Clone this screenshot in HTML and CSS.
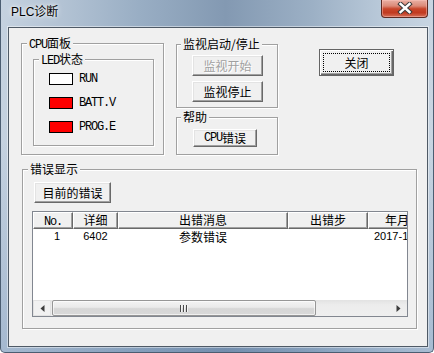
FILE: index.html
```html
<!DOCTYPE html>
<html lang="zh">
<head>
<meta charset="utf-8">
<title>PLC诊断</title>
<link rel="stylesheet" href="styles.css">
</head>
<body>
<div class="window">
  <div class="titlebar">
    <span class="title">PLC诊断</span>
    <div class="close-btn">
      <svg width="16" height="12" viewBox="0 0 16 12">
        <path d="M3.5 2 L12.5 10 M12.5 2 L3.5 10" stroke="#3b3b3b" stroke-width="4.4" stroke-linecap="square" fill="none"/>
        <path d="M3.5 2 L12.5 10 M12.5 2 L3.5 10" stroke="#ffffff" stroke-width="2.4" stroke-linecap="square" fill="none"/>
      </svg>
    </div>
  </div>
  <div class="client">
    <div class="top-row">
      <div class="group cpu">
        <span class="legend"><span class="m">CPU</span>面板</span>
        <div class="group led">
          <span class="legend"><span class="m">LED</span>状态</span>
          <div class="led-row"><span class="led off"></span><span class="m">RUN</span></div>
          <div class="led-row"><span class="led on"></span><span class="m">BATT.V</span></div>
          <div class="led-row"><span class="led on"></span><span class="m">PROG.E</span></div>
        </div>
      </div>
      <div class="mid-col">
        <div class="group monitor">
          <span class="legend mid">监视启动/停止</span>
          <button class="btn mon-btn" disabled>监视开始</button>
          <button class="btn mon-btn">监视停止</button>
        </div>
        <div class="group help">
          <span class="legend mid">帮助</span>
          <button class="btn cpu-btn"><span class="m">CPU</span>错误</button>
        </div>
      </div>
      <button class="btn default-btn"><span class="focus">关闭</span></button>
    </div>
    <div class="group errors">
      <span class="legend">错误显示</span>
      <button class="btn cur-btn">目前的错误</button>
      <div class="list">
        <div class="lv-head">
          <div class="hc c1"><span class="m">No.</span></div>
          <div class="hc c2">详细</div>
          <div class="hc c3">出错消息</div>
          <div class="hc c4">出错步</div>
          <div class="hc c5">年月日时</div>
        </div>
        <div class="lv-row">
          <div class="cell c1 num right">1</div>
          <div class="cell c2 num center">6402</div>
          <div class="cell c3 center">参数错误</div>
          <div class="cell c4"></div>
          <div class="cell c5 num">2017-11-20 10:15</div>
        </div>
        <div class="lv-body"></div>
        <div class="hscroll">
          <div class="sb-btn">
            <svg width="5" height="7" viewBox="0 0 5 7"><polygon points="4.5,0 0.5,3.5 4.5,7" fill="#3c3c3c"/></svg>
          </div>
          <div class="sb-track">
            <div class="sb-thumb">
              <svg width="8" height="7" viewBox="0 0 8 7">
                <rect x="0" y="0" width="1" height="7" fill="#4a4a4a"/>
                <rect x="3" y="0" width="1" height="7" fill="#4a4a4a"/>
                <rect x="6" y="0" width="1" height="7" fill="#4a4a4a"/>
                <rect x="1" y="0" width="1" height="7" fill="#f4f4f4"/>
                <rect x="4" y="0" width="1" height="7" fill="#f4f4f4"/>
                <rect x="7" y="0" width="1" height="7" fill="#f4f4f4"/>
              </svg>
            </div>
          </div>
          <div class="sb-btn">
            <svg width="5" height="7" viewBox="0 0 5 7"><polygon points="0.5,0 4.5,3.5 0.5,7" fill="#3c3c3c"/></svg>
          </div>
        </div>
      </div>
    </div>
  </div>
</div>
</body>
</html>
```

FILE: styles.css
```css
* {
  box-sizing: border-box;
  margin: 0;
  padding: 0;
}

html, body {
  width: 434px;
  height: 353px;
  overflow: hidden;
  background: #ffffff;
}

body {
  font-family: "Noto Sans CJK SC", "Liberation Sans", sans-serif;
  font-size: 12px;
  color: #000;
}

.m {
  font-family: "Liberation Mono", "Noto Sans CJK SC", monospace;
  letter-spacing: -1.2px;
}

.window {
  width: 434px;
  height: 353px;
  display: flex;
  flex-direction: column;
  padding: 0 5px 5px 7px;
  border: 1px solid #4b5d71;
  border-top: none;
  border-radius: 0 0 5px 5px;
  background:
    linear-gradient(180deg, rgba(255,255,255,0) 0%, rgba(255,255,255,0) 40%, rgba(70,110,160,0.25) 100%),
    linear-gradient(90deg, #c5d2e0 0%, #b3c3d4 14%, #99aec4 32%, #8399b2 52%, #9cb0c5 72%, #b9c9d9 88%, #c8d5e2 100%);
}

.titlebar {
  height: 27px;
  display: flex;
  justify-content: space-between;
  align-items: flex-start;
  flex-shrink: 0;
}

.title {
  font-family: "Liberation Sans", "Noto Sans CJK SC", sans-serif;
  font-size: 12px;
  line-height: 14px;
  padding: 5px 0 0 3px;
  color: #000;
  text-shadow: 0 0 6px rgba(255,255,255,0.9), 0 0 3px rgba(255,255,255,0.8);
}

.close-btn {
  width: 47px;
  height: 18px;
  display: flex;
  align-items: center;
  justify-content: center;
  border: 1px solid #5e2a22;
  border-top: none;
  border-radius: 0 0 4px 4px;
  background: linear-gradient(180deg, #e9b0a4 0%, #dc8a78 35%, #c8452a 52%, #c13a20 75%, #d5715a 100%);
  box-shadow: inset 0 0 0 1px rgba(255,200,190,0.45);
}

.close-btn svg {
  display: block;
  margin-top: -1px;
}

.client {
  flex: 1;
  background: #f0f0f0;
  border: 1px solid #4f5a66;
  box-shadow: 0 0 0 1px rgba(255,255,255,0.45);
}

.top-row {
  display: flex;
  align-items: flex-start;
  margin: 15px 0 0 12px;
}

.group {
  position: relative;
  border: 1px solid #a0a0a0;
  box-shadow: 1px 1px 0 #ffffff, inset 1px 1px 0 #ffffff;
}

.legend {
  position: absolute;
  top: -8px;
  left: 5px;
  padding: 0 2px;
  line-height: 14px;
  background: #f0f0f0;
  white-space: nowrap;
}

.legend.mid {
  left: 4px;
}

.cpu {
  width: 143px;
  height: 112px;
  padding: 15px 0 0 11px;
}

.led {
  width: 121px;
  height: 87px;
  padding: 13px 0 0 15px;
}

.led-row {
  display: flex;
  align-items: center;
  gap: 6px;
  height: 12px;
  margin-bottom: 12px;
  line-height: 12px;
}

.led {
  display: block;
}

.led-row .led {
  width: 24px;
  height: 12px;
  padding: 0;
  border: 1px solid #000;
}

.led-row .led.off {
  background: #ffffff;
}

.led-row .led.on {
  background: #ff0000;
}

.mid-col {
  display: flex;
  flex-direction: column;
  gap: 9px;
  margin: 1px 0 0 12px;
}

.monitor {
  width: 102px;
  height: 64px;
  padding: 10px 0 0 15px;
  display: flex;
  flex-direction: column;
  gap: 5px;
}

.help {
  width: 102px;
  height: 38px;
  padding: 11px 0 0 16px;
}

.btn {
  display: flex;
  align-items: center;
  justify-content: center;
  background: #f0f0f0;
  color: #000;
  font-family: "Noto Sans CJK SC", "Liberation Sans", sans-serif;
  font-size: 12px;
  line-height: 14px;
  border: 1px solid;
  border-color: #ffffff #696969 #696969 #ffffff;
  box-shadow: inset -1px -1px 0 #a0a0a0, inset 1px 1px 0 #e3e3e3;
  white-space: nowrap;
}

.btn:disabled {
  color: #a0a0a0;
  text-shadow: 1px 1px 0 #ffffff;
}

.mon-btn {
  width: 71px;
  height: 21px;
}

.cpu-btn {
  width: 64px;
  height: 18px;
}

.default-btn {
  width: 75px;
  height: 27px;
  margin: 6px 0 0 41px;
  padding: 3px;
  border: 1px solid #646464;
  box-shadow: inset 1px 1px 0 #ffffff, inset -1px -1px 0 #696969, inset -2px -2px 0 #a0a0a0;
  align-items: stretch;
}

.focus {
  flex: 1;
  display: flex;
  align-items: center;
  justify-content: center;
  border: 1px dotted #000;
}

.errors {
  width: 395px;
  height: 160px;
  margin: 14px 0 0 13px;
  padding: 12px 0 0 9px;
}

.cur-btn {
  width: 77px;
  height: 21px;
  margin-left: 2px;
}

.list {
  width: 376px;
  height: 106px;
  margin-top: 8px;
  background: #ffffff;
  border: 1px solid #828790;
  overflow: hidden;
  display: flex;
  flex-direction: column;
}

.lv-head,
.lv-row {
  display: flex;
  flex-shrink: 0;
  white-space: nowrap;
}

.hc {
  height: 17px;
  line-height: 14px;
  text-align: center;
  background: #f0f0f0;
  border-top: 1px solid #ffffff;
  border-left: 1px solid #ffffff;
  border-right: 1px solid #696969;
  border-bottom: 1px solid #696969;
  box-shadow: inset -1px -1px 0 #a0a0a0;
  flex-shrink: 0;
}

.c1 { width: 40px; flex-shrink: 0; }
.c2 { width: 45px; flex-shrink: 0; }
.c3 { width: 170px; flex-shrink: 0; }
.c4 { width: 80px; flex-shrink: 0; }
.c5 { width: 110px; flex-shrink: 0; }

.hc.c5 {
  text-align: left;
  padding-left: 16px;
}

.lv-row {
  height: 16px;
  line-height: 15px;
}

.num {
  font-family: "Liberation Sans", sans-serif;
  font-size: 11px;
}

.right {
  text-align: right;
  padding-right: 13px;
}

.center {
  text-align: center;
}

.cell.c5 {
  padding-left: 6px;
}

.lv-body {
  flex: 1;
}

.hscroll {
  height: 16px;
  flex-shrink: 0;
  display: flex;
  background: linear-gradient(180deg, #e2e2e2 0%, #ececec 30%, #efefef 100%);
}

.sb-btn {
  width: 18px;
  height: 16px;
  flex-shrink: 0;
  display: flex;
  align-items: center;
  justify-content: center;
}

.sb-btn:first-child {
  background: #f1f1f1;
  border: 1px solid #e2e2e2;
}

.sb-track {
  flex: 1;
  padding-left: 1px;
  display: flex;
}

.sb-thumb {
  width: 264px;
  height: 16px;
  border: 1px solid #969696;
  border-radius: 2px;
  background: linear-gradient(180deg, #f3f3f3 0%, #e9e9e9 45%, #d6d6d6 55%, #d9d9d9 100%);
  box-shadow: inset 0 0 0 1px rgba(255,255,255,0.6);
  display: flex;
  align-items: center;
  justify-content: center;
}

.sb-thumb svg,
.sb-btn svg {
  display: block;
}
```
